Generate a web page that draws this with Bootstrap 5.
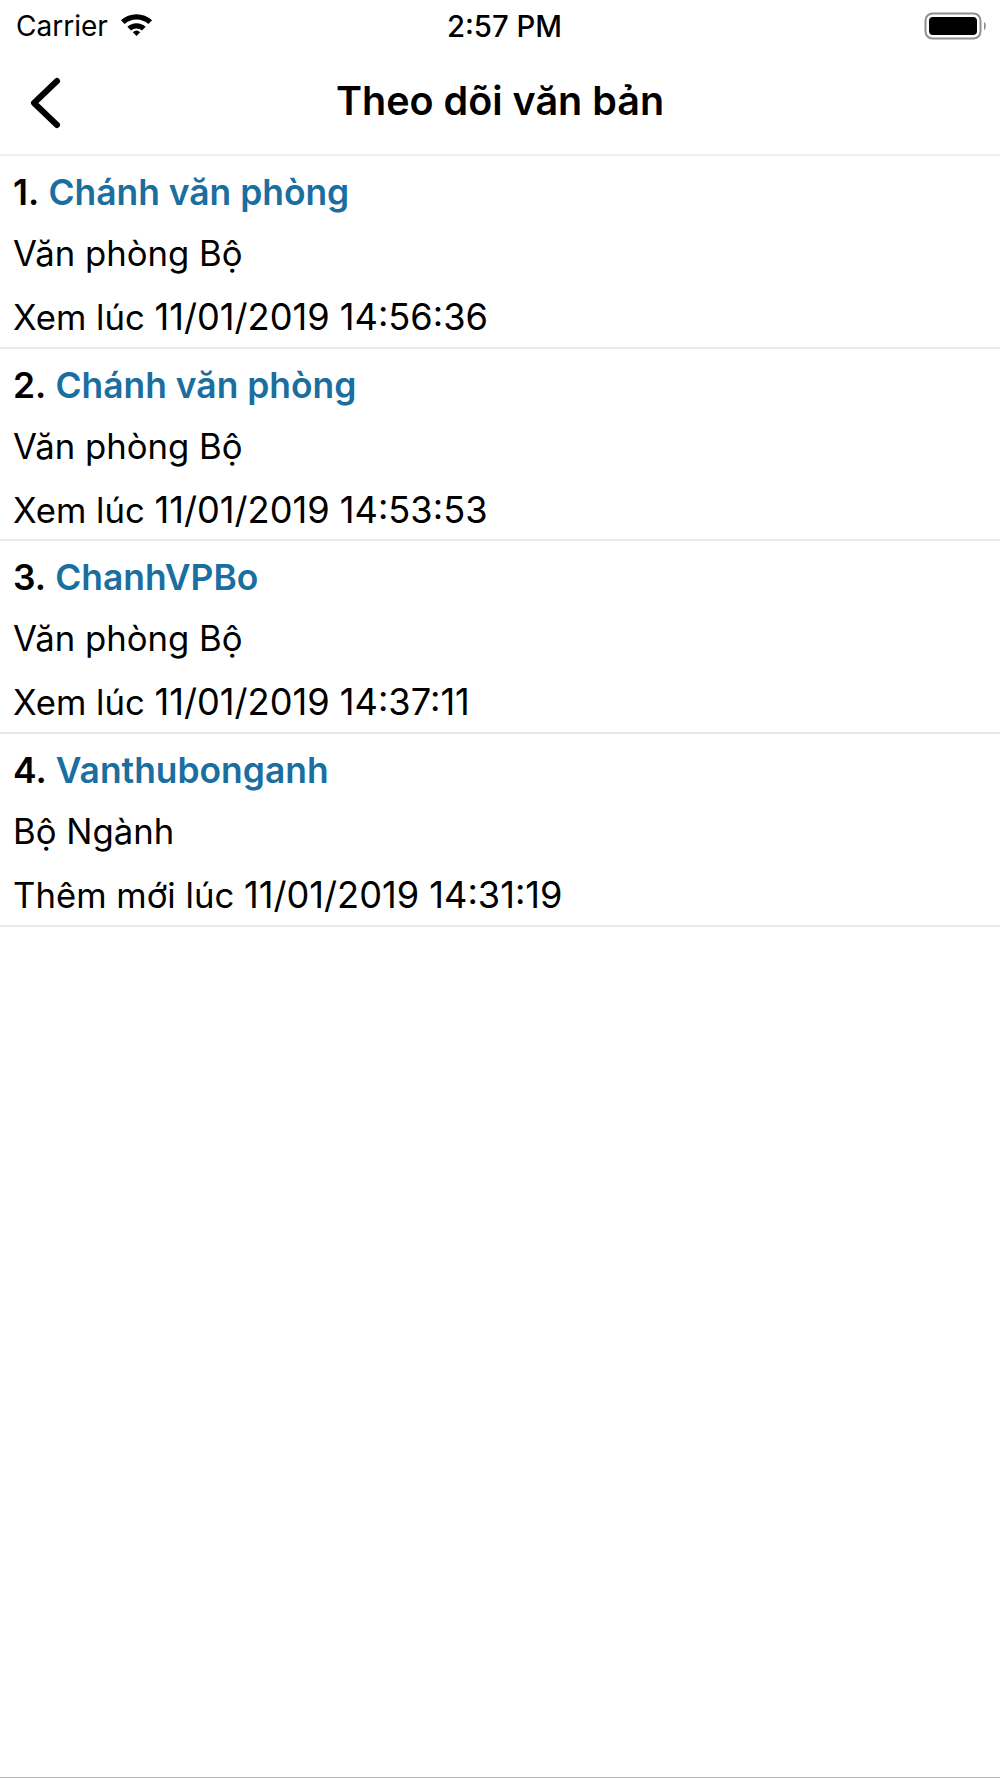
<!DOCTYPE html>
<html lang="en">
<head>
  <meta charset="UTF-8">
  <meta name="viewport" content="width=device-width, initial-scale=1.0">
  <title>Theo dõi văn bản</title>
  <link href="https://cdn.jsdelivr.net/npm/bootstrap@5.3.0/dist/css/bootstrap.min.css" rel="stylesheet">
  <style>
    body {
      font-family: Inter, "Liberation Sans", sans-serif;
      color: #000;
      background: #fff;
    }
    .app-screen {
      height: 1778px;
      border-bottom: 1px solid #b2b2b2;
    }
    .status-row {
      height: 50px;
      padding: 2px 12px 0 16px;
    }
    .status-side {
      width: 300px;
    }
    .carrier-text {
      font-size: 28px;
      line-height: 48px;
    }
    .clock-text {
      font-size: 29.3px;
      font-weight: 500;
      line-height: 48px;
      padding-top: 2px;
      padding-left: 5px;
    }
    .nav-head {
      height: 106px;
      border-bottom: 2px solid #efefef;
    }
    .back-link {
      left: 28px;
      top: 25px;
    }
    .nav-title {
      font-size: 39.5px;
      font-weight: 600;
      line-height: 1;
      margin: 0;
    }
    .log-row {
      height: 192.7px;
      padding: 16px 13px 0;
      border-bottom: 2px solid #e8e8e8;
    }
    .log-name {
      font-size: 35.4px;
      font-weight: 600;
      line-height: 42px;
    }
    .log-name a {
      color: #1a6ea0;
      text-decoration: none;
      margin-left: 1px;
    }
    .log-line {
      font-size: 34.7px;
      line-height: 42px;
      margin-top: 18px;
    }
    .log-line + .log-line {
      margin-top: 22px;
    }
    .log-stamp {
      font-size: 36.2px;
    }
  </style>
</head>
<body>

  <div class="app-screen d-flex flex-column">
    <div class="status-row d-flex align-items-center justify-content-between">
      <div class="status-side d-flex align-items-center gap-2">
        <span class="carrier-text">Carrier</span>
        <svg class="ms-1 mb-1" width="33" height="24" viewBox="0 0 36 26">
          <path d="M1 9 A25 25 0 0 1 35 9 L31 13 A19.500 19.500 0 0 0 5 13 Z" fill="#000"/>
          <path d="M8 16 A15 15 0 0 1 28 16 L24 20 A9.500 9.500 0 0 0 12 20 Z" fill="#000"/>
          <path d="M14 22 A6 6 0 0 1 22 22 L18 26 Z" fill="#000"/>
        </svg>
      </div>
      <span class="clock-text">2:57 PM</span>
      <div class="status-side d-flex justify-content-end">
        <svg width="64" height="30" viewBox="0 0 64 30">
          <rect x="1.500" y="2.500" width="55" height="25" rx="7" fill="#fff" stroke="#8f8f8f" stroke-width="2"/>
          <rect x="5" y="6" width="48" height="18" rx="4" fill="#000"/>
          <path d="M60 11 C62.500 12 62.500 18 60 19 Z" fill="#8f8f8f"/>
        </svg>
      </div>
    </div>

    <div class="nav-head position-relative d-flex align-items-center justify-content-center">
      <a class="back-link position-absolute" href="#">
        <svg width="36" height="56" viewBox="0 0 36 56">
          <path d="M29 6 L6 28 L29 50" fill="none" stroke="#000" stroke-width="6" stroke-linecap="round" stroke-linejoin="round"/>
        </svg>
      </a>
      <h1 class="nav-title">Theo dõi văn bản</h1>
    </div>

    <div id="logList"></div>
  </div>

  <script>
    const entries = [
      { name: 'Chánh văn phòng', unit: 'Văn phòng Bộ', action: 'Xem lúc', stamp: '11/01/2019 14:56:36' },
      { name: 'Chánh văn phòng', unit: 'Văn phòng Bộ', action: 'Xem lúc', stamp: '11/01/2019 14:53:53' },
      { name: 'ChanhVPBo', unit: 'Văn phòng Bộ', action: 'Xem lúc', stamp: '11/01/2019 14:37:11' },
      { name: 'Vanthubonganh', unit: 'Bộ Ngành', action: 'Thêm mới lúc', stamp: '11/01/2019 14:31:19' }
    ];

    const logList = document.getElementById('logList');
    entries.forEach((entry, i) => {
      const row = document.createElement('div');
      row.className = 'log-row';
      row.innerHTML = `
        <div class="log-name">${i + 1}. <a href="#">${entry.name}</a></div>
        <div class="log-line">${entry.unit}</div>
        <div class="log-line">${entry.action} <span class="log-stamp">${entry.stamp}</span></div>
      `;
      logList.appendChild(row);
    });
  </script>
  <script src="https://cdn.jsdelivr.net/npm/bootstrap@5.3.0/dist/js/bootstrap.bundle.min.js"></script>
</body>
</html>
